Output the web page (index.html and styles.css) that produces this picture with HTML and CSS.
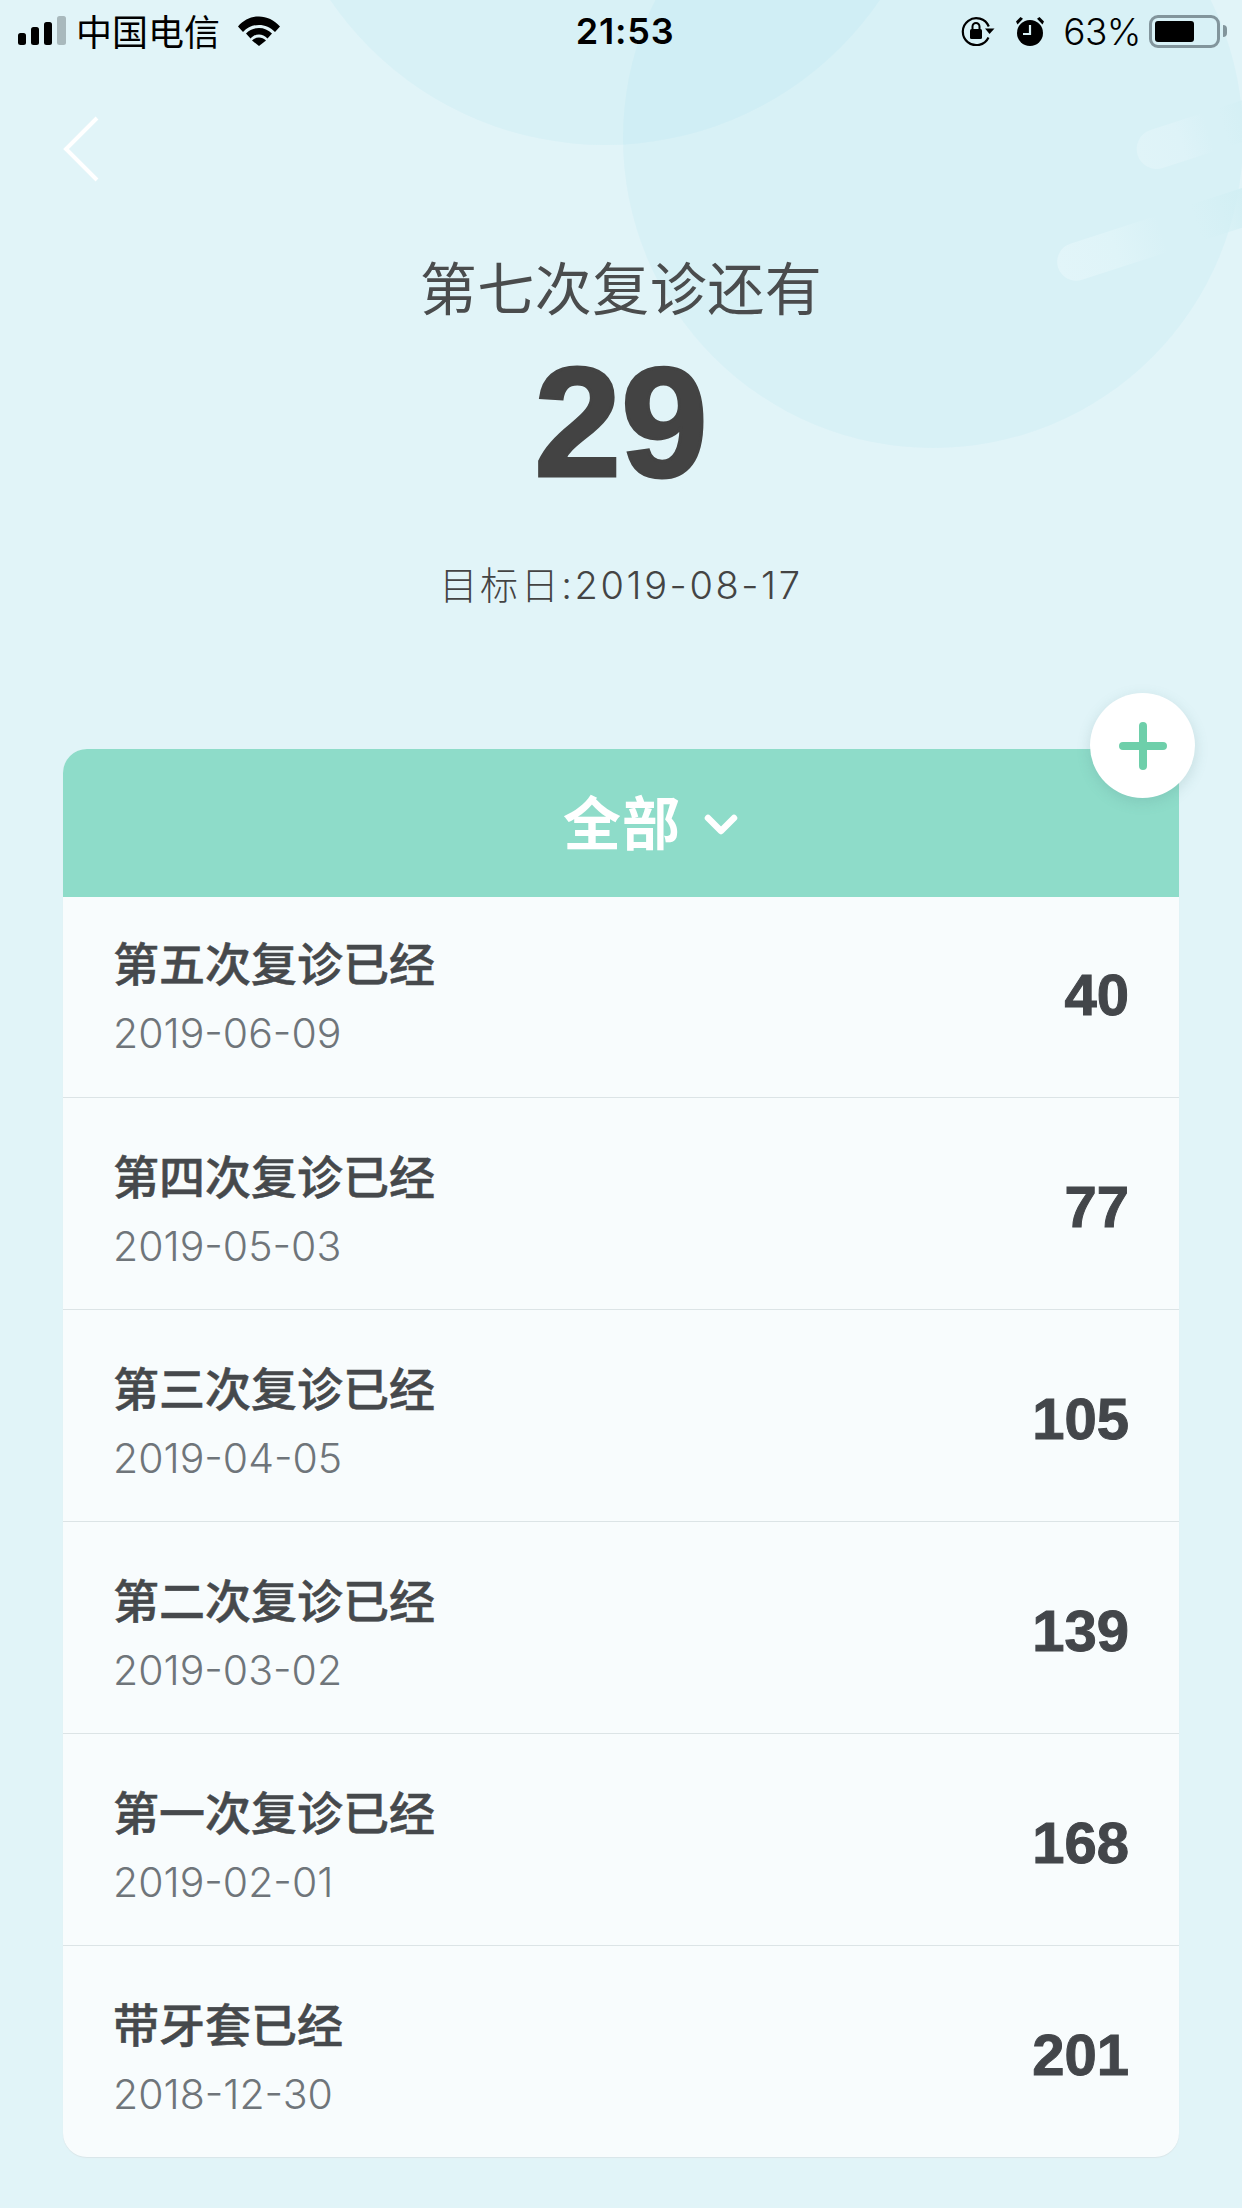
FILE: index.html
```html
<!DOCTYPE html>
<html lang="zh-CN">
<head>
    <meta charset="UTF-8">
    <title>复诊倒计时</title>
    <link rel="stylesheet" href="styles.css">
</head>
<body>
    <div class="screen">
        <!-- Background decoration -->
        <div class="blob blob-top"></div>
        <div class="blob blob-right"></div>
        <div class="streak streak-one"></div>
        <div class="streak streak-two"></div>

        <div class="status-bar">
            <div class="status-side">
                <svg class="icon-signal" width="48" height="30" viewBox="0 0 48 30">
                    <rect x="0" y="17" width="8" height="12" rx="2.5" fill="#000"/>
                    <rect x="13" y="11" width="8" height="18" rx="2.5" fill="#000"/>
                    <rect x="26" y="6" width="8" height="23" rx="2.5" fill="#000"/>
                    <rect x="39" y="0" width="9" height="29" rx="2.5" fill="#a9b9bd"/>
                </svg>
                <span class="carrier">中国电信</span>
                <svg class="icon-wifi" width="42" height="30" viewBox="0 0 42 30">
                    <path d="M0 10.5C11.500 -3 30.500 -3 42 10.500L37 16C28.500 6.500 13.500 6.500 5 16Z" fill="#000"/>
                    <path d="M8 19C15 11.500 27 11.500 34 19L29.500 24C24.500 18.500 17.500 18.500 12.500 24Z" fill="#000" transform="translate(0 -1.500)"/>
                    <path d="M14 24.500C18 20.500 24 20.500 28 24.500L21 30Z" fill="#000"/>
                </svg>
            </div>
            <div class="clock">21:53</div>
            <div class="status-side">
                <svg class="icon-lock" width="34" height="30" viewBox="0 0 34 30">
                    <path d="M27.500 21.500A13.500 13.500 0 1 1 27.800 10.500" fill="none" stroke="#000" stroke-width="2.200"/>
                    <path d="M24 12.500H33.500L28.500 18Z" fill="#000"/>
                    <rect x="9" y="13" width="12" height="10" rx="1.500" fill="#000"/>
                    <path d="M11.500 13V10.500A3.500 3.500 0 0 1 18.500 10.500V13" fill="none" stroke="#000" stroke-width="2"/>
                </svg>
                <svg class="icon-alarm" width="30" height="30" viewBox="0 0 30 30">
                    <circle cx="15" cy="17" r="13" fill="#000"/>
                    <path d="M15 9V18H8" fill="none" stroke="#d8f1f6" stroke-width="2.200"/>
                    <path d="M1 5.500L5.500 1L8 2.800L2.500 8.500Z" fill="#000"/>
                    <path d="M29 5.500L24.500 1L22 2.800L27.500 8.500Z" fill="#000"/>
                </svg>
                <span class="battery-text">63%</span>
                <div class="battery">
                    <div class="battery-level"></div>
                </div>
                <div class="battery-tip"></div>
            </div>
        </div>

        <div class="nav">
            <svg width="36" height="66" viewBox="0 0 36 66">
                <path d="M34 2L3 33L34 64" fill="none" stroke="#fff" stroke-width="4"/>
            </svg>
        </div>

        <div class="hero">
            <div class="hero-title">第七次复诊还有</div>
            <div class="hero-number">29</div>
            <div class="hero-date">目标日:2019-08-17</div>
        </div>

        <div class="card">
            <div class="add-btn">
                <svg width="48" height="48" viewBox="0 0 48 48">
                    <path d="M24 4V44M4 24H44" fill="none" stroke="#6ecfaa" stroke-width="8" stroke-linecap="round"/>
                </svg>
            </div>
            <div class="card-header">
                <span class="filter-label">全部</span>
                <svg class="filter-arrow" width="36" height="24" viewBox="0 0 36 24">
                    <path d="M5 5L18 18L31 5" fill="none" stroke="#fff" stroke-width="6.500" stroke-linecap="round" stroke-linejoin="round"/>
                </svg>
            </div>
            <div class="row">
                <div>
                    <div class="row-title">第五次复诊已经</div>
                    <div class="row-date">2019-06-09</div>
                </div>
                <div class="row-count">40</div>
            </div>
            <div class="row">
                <div>
                    <div class="row-title">第四次复诊已经</div>
                    <div class="row-date">2019-05-03</div>
                </div>
                <div class="row-count">77</div>
            </div>
            <div class="row">
                <div>
                    <div class="row-title">第三次复诊已经</div>
                    <div class="row-date">2019-04-05</div>
                </div>
                <div class="row-count">105</div>
            </div>
            <div class="row">
                <div>
                    <div class="row-title">第二次复诊已经</div>
                    <div class="row-date">2019-03-02</div>
                </div>
                <div class="row-count">139</div>
            </div>
            <div class="row">
                <div>
                    <div class="row-title">第一次复诊已经</div>
                    <div class="row-date">2019-02-01</div>
                </div>
                <div class="row-count">168</div>
            </div>
            <div class="row">
                <div>
                    <div class="row-title">带牙套已经</div>
                    <div class="row-date">2018-12-30</div>
                </div>
                <div class="row-count">201</div>
            </div>
        </div>
    </div>
</body>
</html>
```

FILE: styles.css
```css
* {
    margin: 0;
    padding: 0;
    box-sizing: border-box;
}

body {
    font-family: "Noto Sans CJK SC", sans-serif;
    background: #e1f4f8;
}

.screen {
    position: relative;
    width: 1242px;
    height: 2208px;
    overflow: hidden;
    background: #e1f4f8;
}

.blob {
    position: absolute;
    border-radius: 50%;
    background: rgba(150, 220, 235, 0.11);
}

.blob-top {
    left: 272px;
    top: -521px;
    width: 666px;
    height: 666px;
}

.blob-right {
    left: 623px;
    top: -172px;
    width: 620px;
    height: 620px;
}

.streak {
    position: absolute;
    border-radius: 22px;
    transform: rotate(-18deg);
}

.streak-one {
    left: 1134px;
    top: 112px;
    width: 150px;
    height: 40px;
    background: linear-gradient(90deg, #e0f4f8 0%, #def3f8 30%, rgba(214, 240, 246, 0) 50%, rgba(214, 240, 246, 0) 60%, #d3eff4 85%);
}

.streak-two {
    left: 1052px;
    top: 210px;
    width: 250px;
    height: 38px;
    background: linear-gradient(90deg, #e2f5f9 0%, #dff4f8 24%, rgba(214, 240, 246, 0) 44%, rgba(214, 240, 246, 0) 58%, #d2eff4 80%);
}

.status-bar {
    position: relative;
    height: 62px;
    padding: 0 15px 0 18px;
    display: flex;
    justify-content: space-between;
    align-items: center;
    color: #000;
}

.status-side {
    display: flex;
    align-items: center;
}

.carrier {
    margin: -2px 0 0 10px;
    font-size: 36px;
    line-height: 40px;
}

.icon-wifi {
    margin-left: 18px;
}

.clock {
    margin-left: 9px;
    font-family: "Inter", sans-serif;
    font-size: 36px;
    font-weight: 600;
    letter-spacing: 0.800px;
}

.icon-alarm {
    margin-left: 20px;
}

.battery-text {
    margin-left: 18px;
    font-family: "Inter", sans-serif;
    font-size: 37px;
    font-weight: 300;
    letter-spacing: -0.500px;
}

.battery {
    margin-left: 8px;
    width: 71px;
    height: 33px;
    padding: 3px 3px;
    border: 3px solid #82959c;
    border-radius: 9px;
}

.battery-level {
    width: 39px;
    height: 100%;
    border-radius: 3px;
    background: #000;
}

.battery-tip {
    margin-left: 3px;
    width: 4px;
    height: 12px;
    border-radius: 0 4px 4px 0;
    background: #82959c;
}

.nav {
    position: relative;
    height: 118px;
    padding: 54px 0 0 63px;
}

.hero {
    position: relative;
    text-align: center;
    color: #444;
}

.hero-title {
    margin-top: 70px;
    font-size: 57px;
    line-height: 70px;
    font-weight: 400;
    letter-spacing: 0.500px;
    color: #4a4c4d;
}

.hero-number {
    margin-top: 22px;
    font-family: "Liberation Sans", sans-serif;
    font-size: 156px;
    line-height: 160px;
    font-weight: 700;
    color: #434343;
    -webkit-text-stroke: 3px #434343;
}

.hero-date {
    margin-top: 58px;
    font-family: "Inter", "Noto Sans CJK SC", sans-serif;
    font-size: 38px;
    line-height: 50px;
    font-weight: 300;
    letter-spacing: 2.600px;
}

.card {
    position: relative;
    margin: 139px 63px 0;
    height: 1408px;
    border-radius: 24px;
    background: #f8fcfd;
    box-shadow: 0 1px 1px #d9e5e8;
}

.add-btn {
    position: absolute;
    right: -16px;
    top: -56px;
    width: 105px;
    height: 105px;
    border-radius: 50%;
    background: #fff;
    box-shadow: 0 4px 14px rgba(80, 130, 130, 0.2);
    display: flex;
    align-items: center;
    justify-content: center;
}

.card-header {
    height: 148px;
    padding: 0 0 6px 60px;
    border-radius: 24px 24px 0 0;
    background: #8edcc9;
    display: flex;
    align-items: center;
    justify-content: center;
    gap: 22px;
    color: #fff;
}

.filter-label {
    font-size: 58px;
    font-weight: 700;
    line-height: 70px;
    letter-spacing: 1px;
}

.filter-arrow {
    margin-top: 9px;
}

.row {
    height: 212px;
    padding: 46px 50px 0 50px;
    display: flex;
    justify-content: space-between;
    border-top: 1px solid #dce4e6;
}

.card-header + .row {
    height: 200px;
    padding-top: 34px;
    border-top: 0;
}

.row-title {
    font-size: 46px;
    line-height: 60px;
    font-weight: 500;
    color: #46494c;
    -webkit-text-stroke: 0.500px #46494c;
}

.row-date {
    margin-top: 17px;
    font-family: "Inter", sans-serif;
    font-size: 41px;
    line-height: 50px;
    font-weight: 300;
    color: #6f757a;
}

.row-count {
    align-self: flex-end;
    margin-bottom: 67px;
    font-family: "Liberation Sans", sans-serif;
    font-size: 58px;
    line-height: 70px;
    font-weight: 700;
    color: #43464a;
    -webkit-text-stroke: 1px #43464a;
}
```
